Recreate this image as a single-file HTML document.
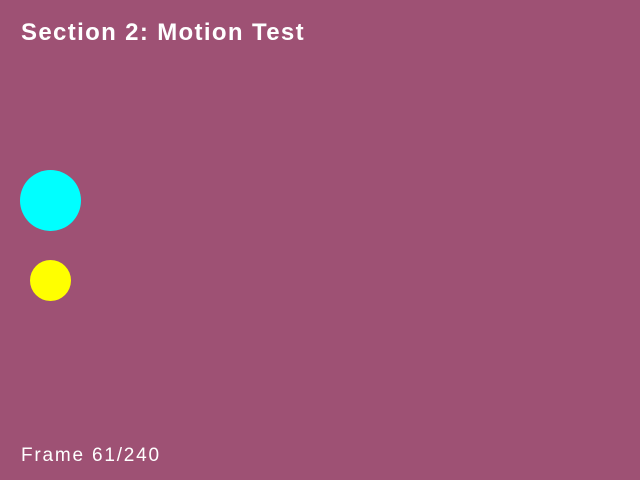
<!DOCTYPE html>
<html><head><style>
html,body{margin:0;padding:0;}
body{width:640px;height:480px;background:#9e5174;position:relative;overflow:hidden;font-family:"Liberation Sans","DejaVu Sans",sans-serif;color:#fff;}
.t{position:absolute;left:21px;top:18px;font-size:24px;font-weight:bold;letter-spacing:1.35px;line-height:30px;white-space:nowrap;}
.f{position:absolute;left:21px;top:445px;font-size:19px;letter-spacing:1.8px;line-height:22px;white-space:nowrap;}
.c{position:absolute;border-radius:50%;}
</style></head><body>
<div class="t">Section 2: Motion Test</div>
<div class="c" style="left:20px;top:170px;width:61px;height:61px;background:#00ffff"></div>
<div class="c" style="left:30px;top:260px;width:41px;height:41px;background:#ffff00"></div>
<div class="f">Frame 61/240</div>
</body></html>
